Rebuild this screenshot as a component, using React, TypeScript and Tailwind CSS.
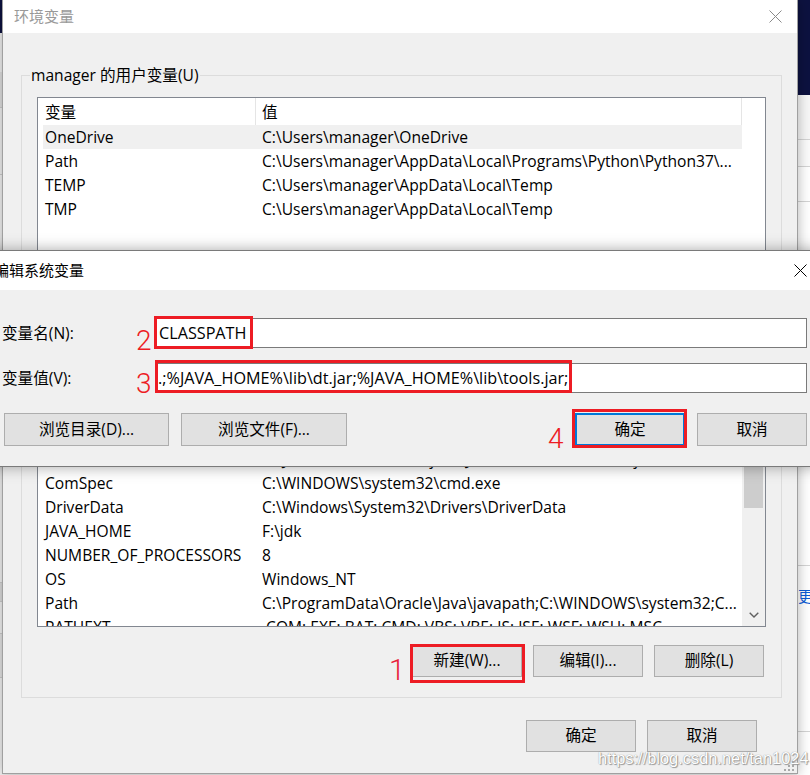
import React from "react";
import clsx from "clsx";

const userVars = [
  { name: "OneDrive", value: "C:\\Users\\manager\\OneDrive", selected: true },
  { name: "Path", value: "C:\\Users\\manager\\AppData\\Local\\Programs\\Python\\Python37\\..." },
  { name: "TEMP", value: "C:\\Users\\manager\\AppData\\Local\\Temp" },
  { name: "TMP", value: "C:\\Users\\manager\\AppData\\Local\\Temp" },
];

const systemVars = [
  { name: "CLASSPATH", value: ".;%JAVA_HOME%\\lib\\dt.jar;%JAVA_HOME%\\lib\\tools.jar;" },
  { name: "ComSpec", value: "C:\\WINDOWS\\system32\\cmd.exe" },
  { name: "DriverData", value: "C:\\Windows\\System32\\Drivers\\DriverData" },
  { name: "JAVA_HOME", value: "F:\\jdk" },
  { name: "NUMBER_OF_PROCESSORS", value: "8" },
  { name: "OS", value: "Windows_NT" },
  { name: "Path", value: "C:\\ProgramData\\Oracle\\Java\\javapath;C:\\WINDOWS\\system32;C..." },
  { name: "PATHEXT", value: ".COM;.EXE;.BAT;.CMD;.VBS;.VBE;.JS;.JSE;.WSF;.WSH;.MSC" },
];

type Row = { name: string; value: string; selected?: boolean };

function CloseX({ color }: { color: string }) {
  return (
    <svg width="13" height="13" viewBox="0 0 13 13">
      <path d="M0.5 0.5 L12.5 12.5 M12.5 0.5 L0.5 12.5" stroke={color} strokeWidth="1" />
    </svg>
  );
}

function WinButton({ children, primary }: { children: React.ReactNode; primary?: boolean }) {
  return (
    <button
      className={clsx(
        "h-[32px] w-[110px] bg-[#e1e1e1] text-black",
        primary ? "border-2 border-[#0078d7]" : "border border-[#adadad]"
      )}
    >
      {children}
    </button>
  );
}

function ListView({ rows, tall, scrollbar }: { rows: Row[]; tall?: boolean; scrollbar?: boolean }) {
  return (
    <div
      className={clsx(
        "flex overflow-hidden border border-[#828790] bg-white",
        tall ? "h-[208px]" : "h-[196px]"
      )}
    >
      <div className="flex min-w-0 flex-1 flex-col">
        {/* header */}
        <div className="flex h-[27px] shrink-0">
          <div className="flex w-[218px] items-center border-r border-[#e5e5e5] pl-[7px] pt-[2px]">变量</div>
          <div className="flex flex-1 items-center border-r border-[#e5e5e5] pl-[6px] pt-[2px]">值</div>
        </div>
        {rows.map((r) => (
          <div
            key={r.name + r.value}
            className={clsx(
              "ml-[5px] flex h-[24px] shrink-0 items-center whitespace-nowrap pt-[2px]",
              r.selected && "bg-[#f0f0f0]"
            )}
          >
            <span className="w-[219px] shrink-0 pl-[2px]">{r.name}</span>
            <span className="min-w-0 flex-1 overflow-hidden">{r.value}</span>
          </div>
        ))}
      </div>
      <div className={clsx("flex w-[23px] shrink-0 flex-col", scrollbar ? "bg-[#f0f0f0]" : "bg-white")}>
        {scrollbar && (
          <>
            <div className="h-[23px]" />
            <div className="ml-[2px] h-[65px] w-[19px] bg-[#cdcdcd]" />
            <div className="flex-1" />
            <div className="flex h-[23px] items-center justify-center">
              <svg width="10" height="6" viewBox="0 0 10 6">
                <path d="M0.7 0.7 L5 5 L9.3 0.7" fill="none" stroke="#606060" strokeWidth="1.4" />
              </svg>
            </div>
          </>
        )}
      </div>
    </div>
  );
}

function GroupBox({
  legend,
  top,
  children,
}: {
  legend: string;
  top: string;
  children: React.ReactNode;
}) {
  return (
    <div className={clsx("relative ml-[18px] mr-[15px] border border-[#dcdcdc] px-[15px] pt-[21px]", top)}>
      <span className="absolute left-[8px] top-[-11px] bg-[#f0f0f0] px-[1px] leading-[20px]">{legend}</span>
      {children}
    </div>
  );
}

export default function App() {
  return (
    <div className="relative h-[775px] w-[810px] overflow-hidden font-['Open_Sans','Noto_Sans_CJK_SC',sans-serif] text-[15.6px] text-black">
      {/* desktop behind the windows */}
      <div className="flex h-full w-full">
        <div className="flex w-[3px] flex-col">
          <div className="h-[33px] bg-[#0d1240]" />
          <div className="h-[39px] bg-[#f2f2f2]" />
          <div className="h-[36px] border-b border-[#cfcfcf] bg-[#e2e2e2]" />
          <div className="h-[67px] border-b border-[#cfcfcf] bg-[#f2f2f2]" />
          <div className="h-[407px] bg-[#f4f4f4]" />
          <div className="h-[20px] border-y border-[#cfcfcf] bg-[#dedede]" />
          <div className="h-[31px] bg-[#f4f4f4]" />
          <div className="h-[45px] border-y border-[#cfcfcf] bg-[#e6e6e6]" />
          <div className="flex-1 bg-[#f4f4f4]" />
        </div>
        <div className="flex-1 bg-[#f0f0f0]" />
        <div className="flex w-[13px] flex-col">
          <div className="h-[95px] bg-[#0d1240]" />
          <div className="h-[45px] border-b border-[#d4d4d4] bg-[#f7f7f7]" />
          <div className="h-[27px] border-b border-[#d4d4d4] bg-[#fbfbfb]" />
          <div className="h-[35px] border-b border-[#d4d4d4] bg-white" />
          <div className="h-[364px] border-b border-[#d4d4d4] bg-white" />
          <div className="h-[20px] bg-white" />
          <div className="overflow-hidden whitespace-nowrap pl-[1px] text-[15px] leading-[20px] text-[#0b5cd5]">更改</div>
          <div className="h-[126px] border-b border-[#d4d4d4] bg-white" />
          <div className="flex-1 bg-white" />
        </div>
      </div>

      {/* 环境变量 window */}
      <div className="absolute left-[2px] top-0 flex h-[774px] w-[796px] flex-col border-x border-b border-[#a0a0a0] shadow-[0_0_12px_rgba(0,0,0,0.3)]">
        <div className="flex h-[33px] shrink-0 items-center justify-between bg-white pl-[11px]">
          <span className="text-[15px] text-[#999999]">环境变量</span>
          <div className="flex h-full w-[44px] items-center justify-center">
            <CloseX color="#8a8a8a" />
          </div>
        </div>
        <div className="flex flex-1 flex-col bg-[#f0f0f0]">
          <GroupBox legend="manager 的用户变量(U)" top="mt-[42px] pb-[12px]">
            <ListView rows={userVars} />
            <div className="mt-[10px] flex justify-end gap-[11px] pr-[2px]">
              <WinButton>新建(N)...</WinButton>
              <WinButton>编辑(E)...</WinButton>
              <WinButton>删除(D)</WinButton>
            </div>
          </GroupBox>
          <GroupBox legend="系统变量(S)" top="mt-[49px] pb-[20px]">
            <ListView rows={systemVars} tall scrollbar />
            <div className="mt-[18px] flex justify-end gap-[11px] pr-[2px]">
              <WinButton>新建(W)...</WinButton>
              <WinButton>编辑(I)...</WinButton>
              <WinButton>删除(L)</WinButton>
            </div>
          </GroupBox>
          <div className="mt-[22px] flex justify-end gap-[11px] pr-[40px]">
            <WinButton>确定</WinButton>
            <WinButton>取消</WinButton>
          </div>
        </div>
      </div>

      {/* 编辑系统变量 window */}
      <div className="absolute left-[-12px] top-[250px] flex h-[217px] w-[834px] flex-col border border-[#7a7a7a] shadow-[0_0_14px_rgba(0,0,0,0.35)]">
        <div className="flex h-[39px] shrink-0 items-center justify-between bg-white pl-[5px]">
          <span className="text-[15px]">编辑系统变量</span>
          <div className="flex h-full w-[42px] items-center justify-center">
            <CloseX color="#000000" />
          </div>
        </div>
        <div className="flex flex-1 flex-col bg-[#f0f0f0] pl-[13px] pr-[14px] pt-[28px]">
          <div className="flex h-[30px] items-center">
            <span className="w-[153px] shrink-0 pt-[2px]">变量名(N):</span>
            <div className="flex h-full flex-1 items-center border border-[#7a7a7a] bg-white pl-[3px] text-[16.2px]">CLASSPATH</div>
          </div>
          <div className="mt-[15px] flex h-[30px] items-center">
            <span className="w-[153px] shrink-0 pt-[2px]">变量值(V):</span>
            <div className="flex h-full flex-1 items-center whitespace-nowrap border border-[#7a7a7a] bg-white pl-[2px] text-[16.2px]">
              .;%JAVA_HOME%\lib\dt.jar;%JAVA_HOME%\lib\tools.jar;
            </div>
          </div>
          <div className="mt-[20px] flex h-[33px] items-stretch">
            <button className="ml-[2px] w-[165px] border border-[#adadad] bg-[#e1e1e1]">浏览目录(D)...</button>
            <button className="ml-[12px] w-[166px] border border-[#adadad] bg-[#e1e1e1]">浏览文件(F)...</button>
            <div className="ml-auto flex gap-[12px]">
              <button className="w-[110px] border-2 border-[#0078d7] bg-[#e1e1e1]">确定</button>
              <button className="w-[110px] border border-[#adadad] bg-[#e1e1e1]">取消</button>
            </div>
          </div>
        </div>
      </div>

      {/* red annotations */}
      <div className="absolute left-[154px] top-[316px] h-[33px] w-[99px] border-[3px] border-[#ed1c24]" />
      <div className="absolute left-[155px] top-[360px] h-[33px] w-[417px] border-[3px] border-[#ed1c24]" />
      <div className="absolute left-[572px] top-[409px] h-[39px] w-[115px] border-[3px] border-[#ed1c24]" />
      <div className="absolute left-[410px] top-[644px] h-[39px] w-[115px] border-[3px] border-[#ed1c24]" />
      <span className="absolute left-[136px] top-[327px] font-['Roboto',sans-serif] text-[28px] font-light leading-none text-[#ed1c24]">2</span>
      <span className="absolute left-[136px] top-[370px] font-['Roboto',sans-serif] text-[28px] font-light leading-none text-[#ed1c24]">3</span>
      <span className="absolute left-[548px] top-[425px] font-['Roboto',sans-serif] text-[28px] font-light leading-none text-[#ed1c24]">4</span>
      <span className="absolute left-[389px] top-[656px] font-['Roboto',sans-serif] text-[29px] font-light leading-none text-[#e8203a]">1</span>

      {/* watermark */}
      <span className="absolute left-[598px] top-[748px] font-['Liberation_Sans',sans-serif] text-[16.4px] leading-[20px] text-white [text-shadow:0_0_1px_#7a7a7a,1px_1px_1px_#9a9a9a]">
        https://blog.csdn.net/tan1024
      </span>

      {/* resize grip */}
      <svg className="absolute left-[784px] top-[761px]" width="11" height="11" viewBox="0 0 11 11">
        <rect x="8" y="0" width="2" height="2" fill="#a8a8a8" />
        <rect x="4" y="4" width="2" height="2" fill="#a8a8a8" />
        <rect x="8" y="4" width="2" height="2" fill="#a8a8a8" />
        <rect x="0" y="8" width="2" height="2" fill="#a8a8a8" />
        <rect x="4" y="8" width="2" height="2" fill="#a8a8a8" />
        <rect x="8" y="8" width="2" height="2" fill="#a8a8a8" />
      </svg>
    </div>
  );
}
